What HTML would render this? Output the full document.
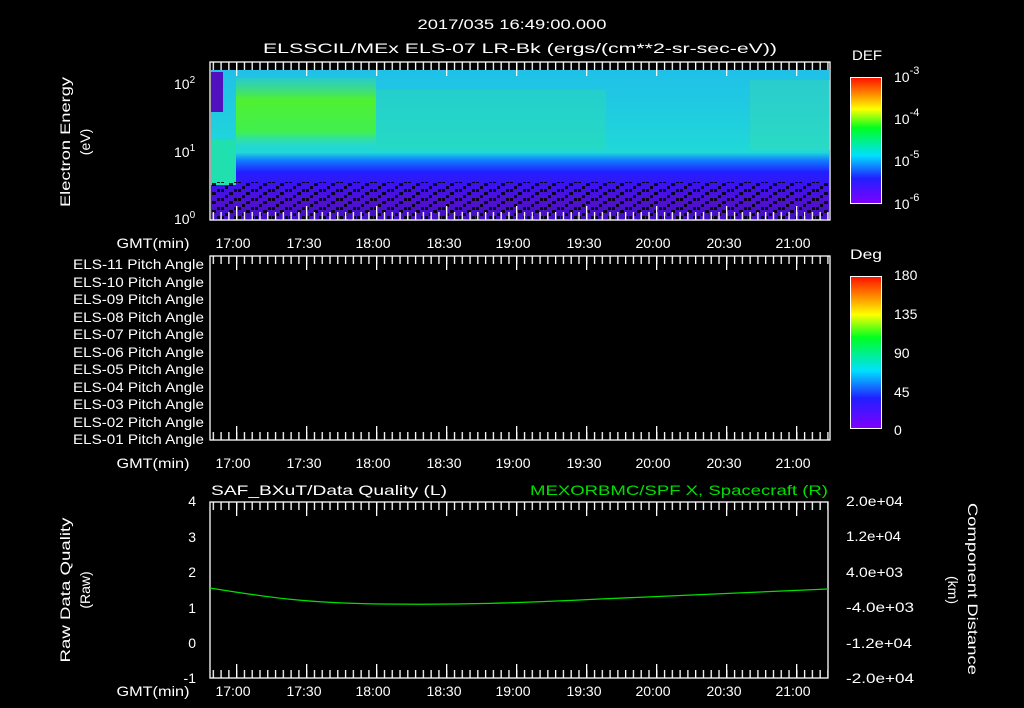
<!DOCTYPE html>
<html><head><meta charset="utf-8"><style>
html,body{margin:0;padding:0;background:#000;}
svg{display:block}
text{font-family:"Liberation Sans",sans-serif;fill:#fff;font-size:14px}
</style></head><body>
<svg width="1024" height="708" viewBox="0 0 1024 708" xmlns="http://www.w3.org/2000/svg">
<defs>
<pattern id="tt" x="236" y="0" width="7.78" height="10" patternUnits="userSpaceOnUse"><rect x="0" y="0" width="1.3" height="10" fill="#fff"/></pattern>
<pattern id="tl" x="236" y="0" width="70" height="20" patternUnits="userSpaceOnUse"><rect x="0" y="0" width="1.3" height="20" fill="#fff"/></pattern>
<linearGradient id="cb1" x1="0" y1="1" x2="0" y2="0">
<stop offset="0" stop-color="#8000ff"/><stop offset="0.2" stop-color="#2020ff"/><stop offset="0.38" stop-color="#00e0ff"/><stop offset="0.6" stop-color="#00ff20"/><stop offset="0.75" stop-color="#ffff00"/><stop offset="0.88" stop-color="#ff8000"/><stop offset="1" stop-color="#ff1000"/></linearGradient>
<linearGradient id="sp" x1="0" y1="0" x2="0" y2="1">
<stop offset="0" stop-color="#20c0e8"/><stop offset="0.55" stop-color="#20d8d8"/><stop offset="0.6" stop-color="#1080ff"/><stop offset="0.68" stop-color="#2020ff"/><stop offset="0.78" stop-color="#4010f0"/><stop offset="0.88" stop-color="#5010d0"/><stop offset="1" stop-color="#4010c0"/></linearGradient>
<linearGradient id="gr" x1="0" y1="0" x2="0" y2="1">
<stop offset="0" stop-color="#40e080" stop-opacity="0.3"/><stop offset="0.3" stop-color="#50f030"/><stop offset="0.75" stop-color="#40f050"/><stop offset="1" stop-color="#30e0c0" stop-opacity="0"/></linearGradient>
<pattern id="noise" width="17" height="9" patternUnits="userSpaceOnUse"><rect x="0" y="0" width="3" height="3" fill="#000"/><rect x="8" y="3" width="4" height="3" fill="#000"/><rect x="4" y="6" width="3" height="3" fill="#000"/><rect x="13" y="0" width="3" height="3" fill="#000"/></pattern>
</defs>

<text x="512" y="29" text-anchor="middle" font-size="16" textLength="189" lengthAdjust="spacingAndGlyphs">2017/035 16:49:00.000</text>
<text x="263" y="53" font-size="16" textLength="514" lengthAdjust="spacingAndGlyphs">ELSSCIL/MEx ELS-07 LR-Bk  (ergs/(cm**2-sr-sec-eV))</text>

<!-- Panel 1 -->
<rect x="211" y="70" width="618" height="150" fill="url(#sp)"/>
<rect x="236" y="78" width="140" height="72" fill="url(#gr)"/>
<rect x="376" y="90" width="230" height="60" fill="#30e0a0" opacity="0.35"/>
<rect x="211" y="140" width="25" height="45" fill="#20e0b0"/>
<rect x="211" y="72" width="12" height="40" fill="#5010c0"/>
<rect x="211" y="182" width="618" height="38" fill="url(#noise)" opacity="0.85"/>
<rect x="750" y="80" width="80" height="70" fill="#40e0a0" opacity="0.35"/>
<rect x="210" y="62" width="620" height="158" fill="none" stroke="#fff" stroke-width="1.3"/>
<rect x="210" y="62" width="620" height="8" fill="url(#tt)"/>
<rect x="210" y="62" width="620" height="14" fill="url(#tl)"/>
<rect x="210" y="212" width="620" height="8" fill="url(#tt)"/>
<rect x="210" y="206" width="620" height="14" fill="url(#tl)"/>
<text x="174" y="89" font-size="15">10<tspan dy="-6" font-size="10">2</tspan></text>
<text x="174" y="157" font-size="15">10<tspan dy="-6" font-size="10">1</tspan></text>
<text x="174" y="224" font-size="15">10<tspan dy="-6" font-size="10">0</tspan></text>
<text transform="translate(70,142) rotate(-90)" text-anchor="middle" font-size="15" textLength="130" lengthAdjust="spacingAndGlyphs">Electron Energy</text>
<text transform="translate(90,142) rotate(-90)" text-anchor="middle" font-size="15">(eV)</text>

<g font-size="15" text-anchor="middle">
<text x="153" y="248" textLength="73" lengthAdjust="spacingAndGlyphs">GMT(min)</text>
<text x="233" y="248">17:00</text><text x="304" y="248">17:30</text><text x="373" y="248">18:00</text><text x="444" y="248">18:30</text><text x="513" y="248">19:00</text><text x="584" y="248">19:30</text><text x="653" y="248">20:00</text><text x="724" y="248">20:30</text><text x="793" y="248">21:00</text>
</g>

<text x="852" y="60" font-size="16" textLength="30" lengthAdjust="spacingAndGlyphs">DEF</text>
<rect x="850.5" y="77.5" width="31" height="126" fill="url(#cb1)" stroke="#fff"/>
<g font-size="16"><text x="894" y="82">10<tspan dy="-8" font-size="11">-3</tspan></text>
<text x="894" y="124">10<tspan dy="-8" font-size="11">-4</tspan></text>
<text x="894" y="166">10<tspan dy="-8" font-size="11">-5</tspan></text>
<text x="894" y="209">10<tspan dy="-8" font-size="11">-6</tspan></text></g>

<!-- Panel 2 -->
<rect x="210" y="256" width="620" height="184" fill="none" stroke="#fff" stroke-width="1.3"/>
<rect x="210" y="256" width="620" height="8" fill="url(#tt)"/>
<rect x="210" y="256" width="620" height="14" fill="url(#tl)"/>
<rect x="210" y="432" width="620" height="8" fill="url(#tt)"/>
<rect x="210" y="426" width="620" height="14" fill="url(#tl)"/>
<g font-size="13">
<text x="73" y="269" textLength="131" lengthAdjust="spacingAndGlyphs">ELS-11 Pitch Angle</text><text x="73" y="287" textLength="131" lengthAdjust="spacingAndGlyphs">ELS-10 Pitch Angle</text><text x="73" y="304" textLength="131" lengthAdjust="spacingAndGlyphs">ELS-09 Pitch Angle</text><text x="73" y="322" textLength="131" lengthAdjust="spacingAndGlyphs">ELS-08 Pitch Angle</text><text x="73" y="339" textLength="131" lengthAdjust="spacingAndGlyphs">ELS-07 Pitch Angle</text><text x="73" y="357" textLength="131" lengthAdjust="spacingAndGlyphs">ELS-06 Pitch Angle</text><text x="73" y="374" textLength="131" lengthAdjust="spacingAndGlyphs">ELS-05 Pitch Angle</text><text x="73" y="392" textLength="131" lengthAdjust="spacingAndGlyphs">ELS-04 Pitch Angle</text><text x="73" y="409" textLength="131" lengthAdjust="spacingAndGlyphs">ELS-03 Pitch Angle</text><text x="73" y="427" textLength="131" lengthAdjust="spacingAndGlyphs">ELS-02 Pitch Angle</text><text x="73" y="444" textLength="131" lengthAdjust="spacingAndGlyphs">ELS-01 Pitch Angle</text>
</g>
<g font-size="15" text-anchor="middle">
<text x="153" y="468" textLength="73" lengthAdjust="spacingAndGlyphs">GMT(min)</text>
<text x="233" y="468">17:00</text><text x="304" y="468">17:30</text><text x="373" y="468">18:00</text><text x="444" y="468">18:30</text><text x="513" y="468">19:00</text><text x="584" y="468">19:30</text><text x="653" y="468">20:00</text><text x="724" y="468">20:30</text><text x="793" y="468">21:00</text>
</g>
<text x="850" y="259" font-size="16" textLength="32" lengthAdjust="spacingAndGlyphs">Deg</text>
<rect x="850.5" y="276.5" width="31" height="152" fill="url(#cb1)" stroke="#fff"/>
<g font-size="17"><text x="894" y="280">180</text><text x="894" y="319">135</text><text x="894" y="358">90</text><text x="894" y="397">45</text><text x="894" y="435">0</text></g>

<!-- Panel 3 -->
<text x="211" y="495" font-size="16" textLength="236" lengthAdjust="spacingAndGlyphs">SAF_BXuT/Data Quality (L)</text>
<text x="530" y="495" font-size="16" style="fill:#00e000" textLength="298" lengthAdjust="spacingAndGlyphs">MEXORBMC/SPF X, Spacecraft (R)</text>
<rect x="210" y="502" width="618" height="176" fill="none" stroke="#fff" stroke-width="1.3"/>
<rect x="210" y="502" width="618" height="8" fill="url(#tt)"/>
<rect x="210" y="502" width="618" height="14" fill="url(#tl)"/>
<rect x="210" y="670" width="618" height="8" fill="url(#tt)"/>
<rect x="210" y="664" width="618" height="14" fill="url(#tl)"/>
<path d="M210 588 C 260 596, 300 603, 380 604 S 520 603, 600 599 S 760 592, 828 589" fill="none" stroke="#00e000" stroke-width="1.3"/>
<g font-size="15" text-anchor="end"><text x="196" y="506">4</text><text x="196" y="542">3</text><text x="196" y="577">2</text><text x="196" y="613">1</text><text x="196" y="648">0</text><text x="196" y="683">-1</text></g>
<g font-size="14"><text x="846" y="506" textLength="57" lengthAdjust="spacingAndGlyphs">2.0e+04</text><text x="846" y="541" textLength="55" lengthAdjust="spacingAndGlyphs">1.2e+04</text><text x="846" y="577" textLength="57" lengthAdjust="spacingAndGlyphs">4.0e+03</text><text x="846" y="612" textLength="68" lengthAdjust="spacingAndGlyphs">-4.0e+03</text><text x="846" y="648" textLength="66" lengthAdjust="spacingAndGlyphs">-1.2e+04</text><text x="846" y="683" textLength="68" lengthAdjust="spacingAndGlyphs">-2.0e+04</text></g>
<text transform="translate(70,590) rotate(-90)" text-anchor="middle" font-size="15" textLength="145" lengthAdjust="spacingAndGlyphs">Raw Data Quality</text>
<text transform="translate(90,590) rotate(-90)" text-anchor="middle" font-size="15">(Raw)</text>
<text transform="translate(968,589) rotate(90)" text-anchor="middle" font-size="15" textLength="172" lengthAdjust="spacingAndGlyphs">Component Distance</text>
<text transform="translate(948,590) rotate(90)" text-anchor="middle" font-size="15">(km)</text>
<g font-size="15" text-anchor="middle">
<text x="153" y="696" textLength="73" lengthAdjust="spacingAndGlyphs">GMT(min)</text>
<text x="233" y="696">17:00</text><text x="304" y="696">17:30</text><text x="373" y="696">18:00</text><text x="444" y="696">18:30</text><text x="513" y="696">19:00</text><text x="584" y="696">19:30</text><text x="653" y="696">20:00</text><text x="724" y="696">20:30</text><text x="793" y="696">21:00</text>
</g>
</svg>
</body></html>
